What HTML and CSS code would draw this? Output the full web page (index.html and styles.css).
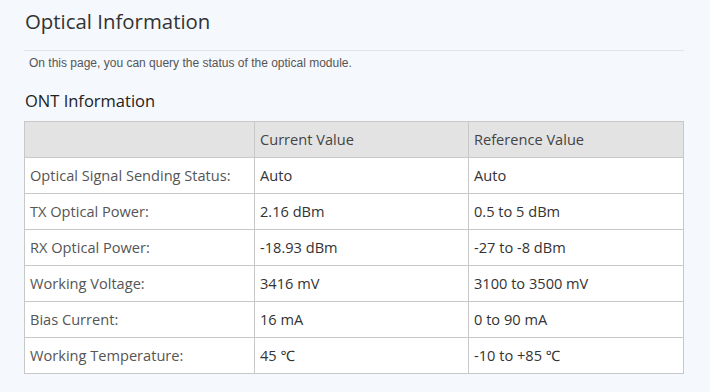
FILE: index.html
```html
<!DOCTYPE html>
<html>
<head>
<meta charset="utf-8">
<link rel="stylesheet" href="styles.css">
</head>
<body>
<div class="page">
  <h1 class="title">Optical Information</h1>
  <p class="desc">On this page, you can query the status of the optical module.</p>
  <h2 class="subtitle">ONT Information</h2>
  <table class="info">
    <thead>
      <tr><th class="c1"></th><th class="c2">Current Value</th><th class="c3">Reference Value</th></tr>
    </thead>
    <tbody>
      <tr><td class="lbl">Optical Signal Sending Status:</td><td>Auto</td><td>Auto</td></tr>
      <tr><td class="lbl">TX Optical Power:</td><td>2.16 dBm</td><td>0.5 to 5 dBm</td></tr>
      <tr><td class="lbl">RX Optical Power:</td><td>-18.93 dBm</td><td>-27 to -8 dBm</td></tr>
      <tr><td class="lbl">Working Voltage:</td><td>3416 mV</td><td>3100 to 3500 mV</td></tr>
      <tr><td class="lbl">Bias Current:</td><td>16 mA</td><td>0 to 90 mA</td></tr>
      <tr><td class="lbl">Working Temperature:</td><td>45 ℃</td><td>-10 to +85 ℃</td></tr>
    </tbody>
  </table>
</div>
</body>
</html>
```
FILE: styles.css
```css
html, body {
  margin: 0;
  padding: 0;
  background: #f5f8fc;
}
.page {
  padding: 8px 26px 0 24px;
  font-family: "Open Sans", "Noto Sans", sans-serif;
  color: #333;
}
.title {
  margin: 0;
  padding: 0 0 0 1px;
  height: 42px;
  font-size: 20.4px;
  font-weight: normal;
  line-height: 27px;
  color: #333;
  border-bottom: 1px solid #e2e4e6;
}
.desc {
  margin: 0;
  padding: 4px 0 0 5px;
  font-family: "Liberation Sans", Arial, sans-serif;
  font-size: 12px;
  line-height: 16px;
  color: #555;
}
.subtitle {
  margin: 0;
  padding: 18px 0 0 1px;
  height: 32px;
  font-size: 16.5px;
  font-weight: normal;
  line-height: 24px;
  color: #222;
}
.info {
  width: 660px;
  border-collapse: collapse;
  background: #fff;
  font-size: 14.6px;
}
.info th, .info td {
  border: 1px solid #c8c8c8;
  height: 33px;
  padding: 0 0 2px 5px;
  text-align: left;
  font-weight: normal;
  vertical-align: middle;
}
.info th {
  background: #e3e3e3;
  color: #444;
}
.info td { color: #333; }
.info td.lbl { color: #555; }
.c1 { width: 224px; }
.c2 { width: 208px; }
```
